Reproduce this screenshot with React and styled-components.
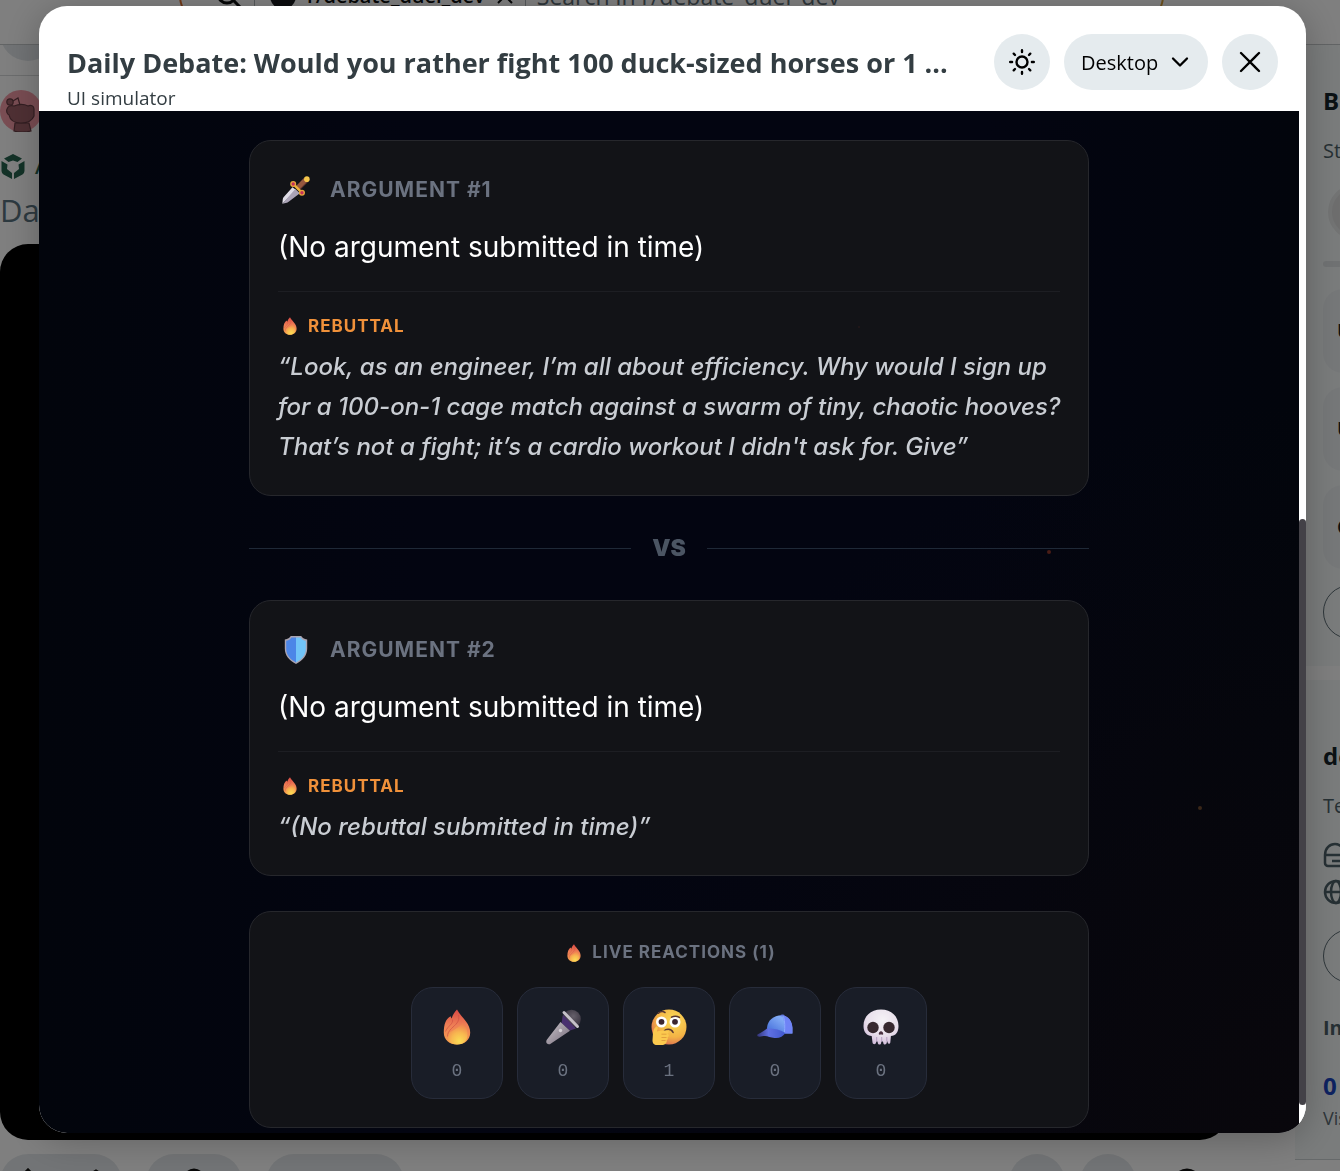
import React from "react";
import styled, { createGlobalStyle } from "styled-components";

const debate = [
  {
    title: "Argument #1",
    icon: "dagger",
    text: "(No argument submitted in time)",
    rebuttal:
      "“Look, as an engineer, I’m all about efficiency. Why would I sign up for a 100-on-1 cage match against a swarm of tiny, chaotic hooves? That’s not a fight; it’s a cardio workout I didn't ask for. Give”",
  },
  {
    title: "Argument #2",
    icon: "shield",
    text: "(No argument submitted in time)",
    rebuttal: "“(No rebuttal submitted in time)”",
  },
];

const reactions = [
  { icon: "fire", label: "Fire", count: 0 },
  { icon: "mic", label: "Mic drop", count: 0 },
  { icon: "thinking", label: "Thinking", count: 1 },
  { icon: "cap", label: "Cap", count: 0 },
  { icon: "skull", label: "Skull", count: 0 },
];

const sparks = [
  { x: "80%", y: "43%", size: 4, color: "#4a1d16" },
  { x: "92%", y: "68%", size: 4, color: "#3a2718" },
  { x: "65%", y: "21%", size: 2, color: "#24181a" },
];

function Fire({ size }) {
  return (
    <svg width={size} height={size} viewBox="0 0 40 40" aria-hidden="true">
      <defs>
        <linearGradient id="fireBack" x1="0.5" y1="0" x2="0.5" y2="1">
          <stop offset="0" stopColor="#dc4a45" />
          <stop offset="0.45" stopColor="#ee7f55" />
          <stop offset="1" stopColor="#f5a04d" />
        </linearGradient>
        <radialGradient id="fireFront" cx="0.58" cy="0.85" r="0.8">
          <stop offset="0" stopColor="#fbdc55" />
          <stop offset="0.5" stopColor="#f8b850" />
          <stop offset="1" stopColor="#ee8050" />
        </radialGradient>
      </defs>
      <path
        d="M20 2.500c2.500 5 6 7.500 9 12 2.500 3.500 4.200 6.500 4.200 11C33.200 33 27.500 37.500 20 37.500S6.800 33 6.800 25.500c0-4 .4-7.500 1.700-10.500 1-2.500 2.800-4.500 5.300-5.800.2 1 .3 1.600.9 2.300C15.500 8 17.500 5 20 2.500z"
        fill="url(#fireBack)"
      />
      <path
        d="M25.500 16c4 4 5.500 8.500 5 13-.6 5-4.500 8.500-10.500 8.500-6.500 0-9.500-4-9-8.500.6-5.500 10-6.500 14.500-13z"
        fill="url(#fireFront)"
      />
      <path
        d="M21.500 8c1.500 7-3 9.500-7 13.500-2.800 2.800-4 5-4 8M15.500 12.500c1 4.500-4.500 6-7 12"
        fill="none"
        stroke="#cf5045"
        strokeWidth="1"
        opacity="0.7"
      />
    </svg>
  );
}

function Mic({ size }) {
  return (
    <svg width={size} height={size} viewBox="0 0 40 40" aria-hidden="true">
      <defs>
        <linearGradient id="micBody" x1="0" y1="0" x2="1" y2="1">
          <stop offset="0.2" stopColor="#b9b3ba" />
          <stop offset="1" stopColor="#756a7a" />
        </linearGradient>
        <radialGradient id="micHead" cx="0.6" cy="0.35" r="0.7">
          <stop offset="0" stopColor="#66606b" />
          <stop offset="1" stopColor="#2b2632" />
        </radialGradient>
      </defs>
      <circle cx="28.500" cy="12" r="9.300" fill="url(#micHead)" />
      <path d="M20 8L33 21.500l-6 2-8.500-7.500z" fill="#49306f" />
      <path
        d="M17.500 15l9.500 8.800L8 36.500c-1.500 1.200-3 1-4 0s-1-2.500 0-4z"
        fill="url(#micBody)"
      />
      <path
        d="M21 5.500L34.500 19.500"
        stroke="#c6c1c9"
        strokeWidth="3"
        strokeLinecap="round"
      />
      <circle cx="17.500" cy="23.500" r="1.700" fill="#d8d3da" />
    </svg>
  );
}

function Thinking({ size }) {
  return (
    <svg width={size} height={size} viewBox="0 0 40 40" aria-hidden="true">
      <defs>
        <radialGradient id="thinkFace" cx="0.65" cy="0.3" r="0.75">
          <stop offset="0" stopColor="#fbdc58" />
          <stop offset="0.65" stopColor="#f3b345" />
          <stop offset="1" stopColor="#dc7050" />
        </radialGradient>
      </defs>
      <circle cx="20" cy="20" r="17.500" fill="url(#thinkFace)" />
      <circle cx="12.500" cy="15" r="5.500" fill="#fff" />
      <circle cx="26" cy="15" r="5.500" fill="#fff" />
      <circle cx="12.500" cy="14.800" r="2.900" fill="#3b2530" />
      <circle cx="26" cy="14.800" r="2.900" fill="#3b2530" />
      <path
        d="M9.500 6.200c2-1.800 4.500-2 6.500-.7M22.500 10.200c2.500-1.300 5.500-1.200 8 .1M14.800 25c1.500-3.500 7.500-3.700 9.300.5"
        fill="none"
        stroke="#573530"
        strokeWidth="1.500"
        strokeLinecap="round"
      />
      <path
        d="M4 26c0-2.500 1-5 3-6.300 1.200-.6 2.200.5 1.700 1.800L7.900 24.500c2.800-.6 7-1.200 10.100-.9 2.200.3 2.200 2.800.2 3.200l1.200.6c1 1-.1 2.600-1 2.800 1 1 .3 2.500-.7 2.800.5 1.500-.5 4.500-4 5H8c-3 0-4.700-2-4.500-5z"
        fill="#fbc94e"
      />
      <path
        d="M12.500 27.200h5M12.500 30.500h5M12.500 33.500h4"
        stroke="#dc9638"
        strokeWidth="0.800"
      />
    </svg>
  );
}

function Cap({ size }) {
  return (
    <svg width={size} height={size} viewBox="0 0 40 40" aria-hidden="true">
      <defs>
        <linearGradient id="capCrown" x1="0" y1="1" x2="1" y2="0">
          <stop offset="0" stopColor="#3f68d8" />
          <stop offset="0.7" stopColor="#83adf6" />
          <stop offset="1" stopColor="#7385f7" />
        </linearGradient>
        <linearGradient id="capBrim" x1="0" y1="0" x2="1" y2="0">
          <stop offset="0" stopColor="#343579" />
          <stop offset="0.4" stopColor="#5f70e2" />
          <stop offset="1" stopColor="#4058ce" />
        </linearGradient>
      </defs>
      <path
        d="M12 21c.5-7.500 6-12.500 15-12.800 6 .8 9.800 5.500 10.300 12.500v5.800h-10L12 24z"
        fill="url(#capCrown)"
      />
      <path d="M27.500 8.200c1.800 5.500 2.500 11 1.800 18.300h8.200v-5.700c-.5-7-4-11.500-10-12.600z" fill="#6f83f6" />
      <path d="M28.500 9c1.500 6 1.600 11 .8 17" fill="none" stroke="#8aa9ff" strokeWidth="1" />
      <path
        d="M2.500 27.500c4-2 7-4 9.500-6 6.500-.2 13.500 1 18.500 4.500-2.500 3.500-6 5.500-11 5-4-.5-6.500-1.800-9.500-2-2.500 0-4.500 1-6.500.6-1.200-.4-1.600-1.300-1-2.100z"
        fill="url(#capBrim)"
      />
      <ellipse cx="27.500" cy="8.400" rx="2" ry="0.900" fill="#637bdf" />
    </svg>
  );
}

function Skull({ size }) {
  return (
    <svg width={size} height={size} viewBox="0 0 40 40" aria-hidden="true">
      <defs>
        <radialGradient id="skullHead" cx="0.55" cy="0.3" r="0.75">
          <stop offset="0" stopColor="#f5f2f6" />
          <stop offset="0.6" stopColor="#e8dfeb" />
          <stop offset="1" stopColor="#cfb7d8" />
        </radialGradient>
      </defs>
      <path
        d="M20 2.500C9.500 2.500 2.500 9.500 2.500 19c0 6.500 3.500 9.700 8.200 10l.8 6.500c.2 2 3 2.200 3.500.5l.3-1.500h1.200l.3 1.500c.4 2 3 2 3.300.2l.3-1.700H22l.3 1.500c.4 2 3 2 3.400.1l.3-1.600h.5l.2 1.200c.4 1.500 2.400 1.300 2.600-.2l.6-6.500c4.700-.3 7.600-3.500 7.600-10C37.500 9.500 30.500 2.500 20 2.500z"
        fill="url(#skullHead)"
      />
      <circle cx="12" cy="20.500" r="5.700" fill="#37292f" />
      <circle cx="28" cy="20.500" r="5.700" fill="#37292f" />
      <path
        d="M20 24.300c1.300 0 2.500 1.900 2.200 3-.3.700-1.400.2-2.200.2s-1.900.5-2.200-.2c-.3-1.100.9-3 2.200-3z"
        fill="#4a3140"
      />
      <path d="M15.700 30v4.500M20.700 30v4.500M25.800 30v4.500" stroke="#a991b7" strokeWidth="0.800" />
    </svg>
  );
}

function Dagger({ size }) {
  return (
    <svg width={size} height={size} viewBox="0 0 40 40" aria-hidden="true">
      <path d="M15 16l5 4L0.500 39.500 1 34c.3-2 1-3.500 2.500-5z" fill="#dfdce6" />
      <path d="M19 18.500l6.500 6L10 36.500c-1.500 1-2.500 1.700-4.500 2.200l-5 .8z" fill="#aaa3b6" />
      <path d="M22 17.500L34 5.500" stroke="#96583f" strokeWidth="7.500" />
      <path d="M24.500 20L36.500 8" stroke="#6f3d33" strokeWidth="1.500" />
      <path d="M16.500 12L28 23.500" stroke="#efb23c" strokeWidth="3.500" strokeLinecap="round" />
      <circle cx="16" cy="11.500" r="4.300" fill="#e6a53b" />
      <circle cx="28.500" cy="24" r="4.300" fill="#e6a53b" />
      <circle cx="16" cy="11.500" r="2.400" fill="#c42e5a" />
      <circle cx="28.500" cy="24" r="2.400" fill="#c42e5a" />
      <circle cx="35.500" cy="4.500" r="4" fill="#f5c64c" />
    </svg>
  );
}

function Shield({ size }) {
  return (
    <svg width={size} height={size} viewBox="0 0 40 40" aria-hidden="true">
      <path
        d="M12.500 0h15c1.500 2.500 4 4.500 8.500 5v13c0 10-6 17-16 22C10 35 4 28 4 18V5c4.500-.5 7-2.500 8.500-5z"
        fill="#aaa4b1"
      />
      <path d="M20 2h-6.500c-1.500 2.700-4 4.400-7.500 4.900V18c0 9 5 15 14 19.700z" fill="#4c86e7" />
      <path d="M20 2h6.500c1.500 2.700 4 4.400 7.500 4.900V18c0 9-5 15-14 19.700z" fill="#71c4f8" />
    </svg>
  );
}

const emojis = {
  fire: Fire,
  mic: Mic,
  thinking: Thinking,
  cap: Cap,
  skull: Skull,
  dagger: Dagger,
  shield: Shield,
};

function Emoji({ name, size }) {
  const Icon = emojis[name];
  return <Icon size={size} />;
}

function Backdrop() {
  return (
    <Page>
      <TopBar>
        <SearchBar>
          <svg width="28" height="28" viewBox="0 0 28 28" fill="none" stroke="#0b0d0e" strokeWidth="3">
            <circle cx="12" cy="12" r="9" />
            <path d="M18.500 18.500l7 7" />
          </svg>
          <Separator />
          <CommunityDot />
          <strong>r/debate_duel_dev</strong>
          <svg width="18" height="18" viewBox="0 0 18 18" stroke="#0b0d0e" strokeWidth="2">
            <path d="M2 2l14 14M16 2L2 16" />
          </svg>
          <Separator />
          <span>Search in r/debate_duel_dev</span>
        </SearchBar>
      </TopBar>
      <Columns>
        <Feed>
          <BackRow>
            <BackButton type="button" aria-label="Back" />
          </BackRow>
          <Author>
            <svg width="42" height="42" viewBox="0 0 42 42" aria-hidden="true">
              <circle cx="21" cy="21" r="21" fill="#f39aa6" />
              <g fill="#9e6068" stroke="#653c43" strokeWidth="1.200">
                <path d="M15 33h14l2 8c-6 1.500-12 1.500-17 0z" />
                <path d="M7 19c1-3 4-4 7-3 5-2 10-2 14 0 3-1.500 6 0 6 3v7c-2 5-8 7-13 7-7 0-11-3-12-8-2-1-3-4-2-6z" />
                <circle cx="10" cy="12" r="3.200" />
                <path d="M13 11l5-3 2 7" fill="none" />
              </g>
            </svg>
          </Author>
          <AppTag>
            <svg width="26" height="26" viewBox="0 0 26 26" fill="#27644f" aria-hidden="true">
              <path d="M13 1l9 4.500-4.500 3.500-4.500-1.500L8.500 9 4 5.500z" />
              <path d="M1.500 8l6 3.500-.5 4.500 5 4v6l-8.500-4.500a4 4 0 0 1-2-3.400z" />
              <path d="M24.500 8l-6 3.500.5 4.500-5 4v6l8.500-4.500a4 4 0 0 0 2-3.400z" />
            </svg>
            <span>APP</span>
          </AppTag>
          <PostTitle>Daily</PostTitle>
          <Media />
          <PostActions>
            <Pill $width={122}>
              <svg width="90" height="18" viewBox="0 0 90 18" fill="none" stroke="#111" strokeWidth="3">
                <path d="M4 10l8-8 8 8M72 8l8-5 8 5" />
              </svg>
            </Pill>
            <Pill $width={96}>
              <svg width="22" height="22" viewBox="0 0 22 22" fill="none" stroke="#111" strokeWidth="3">
                <circle cx="11" cy="11" r="9" />
              </svg>
            </Pill>
            <Pill $width={138} />
            <ActionsEnd>
              <Pill $width={56} />
              <Pill $width={56} />
              <Views>
                <svg width="24" height="22" viewBox="0 0 24 22" fill="none" stroke="#111" strokeWidth="3">
                  <ellipse cx="12" cy="11" rx="11" ry="9" />
                </svg>
              </Views>
            </ActionsEnd>
          </PostActions>
        </Feed>
        <Sidebar>
          <Rules>
            <h2>Build</h2>
            <p>Steps</p>
            <Ring />
            <Progress />
            <Task>U</Task>
            <Task>U</Task>
            <Task>C</Task>
            <Outline type="button" aria-label="Show all" />
          </Rules>
          <About>
            <h2>debate_duel_dev</h2>
            <p>Test</p>
            <svg width="24" height="26" viewBox="0 0 24 26" fill="none" stroke="#4d6169" strokeWidth="2.500">
              <path d="M5 24h14a3 3 0 0 0 3-3v-8c0-7-5-11-10-11S2 6 2 13v8a3 3 0 0 0 3 3zM3 13h18M9 19h12" />
            </svg>
            <svg width="26" height="26" viewBox="0 0 26 26" fill="none" stroke="#4d6169" strokeWidth="2.500">
              <circle cx="13" cy="13" r="11" />
              <ellipse cx="13" cy="13" rx="5" ry="11" />
              <path d="M2 13h22" />
            </svg>
            <Outline type="button" aria-label="Guide" />
            <h3>Insights</h3>
            <Stat>0</Stat>
            <small>Visitors</small>
          </About>
        </Sidebar>
      </Columns>
    </Page>
  );
}

function ArgumentCard({ item }) {
  return (
    <Card>
      <ArgumentHead>
        <Emoji name={item.icon} size={28} />
        <h2>{item.title}</h2>
      </ArgumentHead>
      <ArgumentText>{item.text}</ArgumentText>
      <Rebuttal>
        <RebuttalHead>
          <Emoji name="fire" size={20} />
          Rebuttal
        </RebuttalHead>
        <Quote>{item.rebuttal}</Quote>
      </Rebuttal>
    </Card>
  );
}

function App() {
  return (
    <>
      <GlobalStyle />
      <Backdrop />
      <Overlay>
        <Modal role="dialog" aria-labelledby="simulator-title">
          <ModalHeader>
            <Titles>
              <h1 id="simulator-title">
                Daily Debate: Would you rather fight 100 duck-sized horses or 1 ...
              </h1>
              <p>UI simulator</p>
            </Titles>
            <Controls>
              <RoundButton type="button" aria-label="Toggle theme">
                <svg width="28" height="28" viewBox="0 0 28 28" fill="none" stroke="#000" strokeWidth="2.400" strokeLinecap="round">
                  <circle cx="14" cy="14" r="5.500" />
                  <path d="M14 2.200v1.900M14 23.900v1.900M2.200 14h1.900M23.900 14h1.900M5.700 5.700l1.300 1.300M21 21l1.300 1.300M22.300 5.700l-1.300 1.300M7 21l-1.300 1.300" />
                </svg>
              </RoundButton>
              <DeviceField>
                <select aria-label="Device" defaultValue="Desktop">
                  <option>Desktop</option>
                  <option>Mobile</option>
                </select>
                <svg width="18" height="12" viewBox="0 0 18 12" fill="none" stroke="#000" strokeWidth="2.300" strokeLinecap="round" strokeLinejoin="round">
                  <path d="M2 2.500l7 7 7-7" />
                </svg>
              </DeviceField>
              <RoundButton type="button" aria-label="Close">
                <svg width="22" height="22" viewBox="0 0 22 22" stroke="#000" strokeWidth="2.300" strokeLinecap="round">
                  <path d="M2 2l18 18M20 2L2 20" />
                </svg>
              </RoundButton>
            </Controls>
          </ModalHeader>
          <ModalBody>
            <Stage>
              {sparks.map((spark, index) => (
                <Spark
                  key={index}
                  style={{
                    left: spark.x,
                    top: spark.y,
                    width: spark.size,
                    height: spark.size,
                    background: spark.color,
                  }}
                />
              ))}
              <Content>
                <ArgumentCard item={debate[0]} />
                <Versus>VS</Versus>
                <ArgumentCard item={debate[1]} />
                <ReactionCard>
                  <ReactionHead>
                    <Emoji name="fire" size={20} />
                    Live reactions (1)
                  </ReactionHead>
                  <ReactionList>
                    {reactions.map((item) => (
                      <Reaction key={item.icon} type="button" aria-label={item.label}>
                        <Emoji name={item.icon} size={40} />
                        <span>{item.count}</span>
                      </Reaction>
                    ))}
                  </ReactionList>
                </ReactionCard>
              </Content>
            </Stage>
            <ScrollTrack>
              <ScrollThumb />
            </ScrollTrack>
          </ModalBody>
        </Modal>
      </Overlay>
    </>
  );
}

export default App;

const GlobalStyle = createGlobalStyle`
  * {
    box-sizing: border-box;
  }
  html, body, #root {
    height: 100%;
  }
  body {
    margin: 0;
    overflow: hidden;
    background: #fff;
    font-family: "Open Sans", "Noto Sans", sans-serif;
  }
  h1, h2, h3, p {
    margin: 0;
  }
  button, select {
    font: inherit;
  }
  svg {
    display: block;
    flex-shrink: 0;
  }
`;

const Page = styled.div`
  height: 100%;
  display: flex;
  flex-direction: column;
  overflow: hidden;
`;
const TopBar = styled.header`
  height: 98px;
  flex-shrink: 0;
  margin-top: -53px;
  padding: 0 176px 0 179px;
  display: flex;
  align-items: center;
  border-bottom: 1px solid #c4c8ca;
`;
const SearchBar = styled.div`
  flex: 1;
  height: 56px;
  padding-left: 34px;
  display: flex;
  align-items: center;
  gap: 11px;
  border: 2px solid #e0702f;
  border-right-color: #d9a13a;
  border-radius: 28px;
  font-size: 20px;
  line-height: 28px;
  color: #0b0d0e;
  white-space: nowrap;
  strong {
    font-weight: 600;
  }
  span {
    font-size: 23px;
    color: #5c6c74;
  }
`;
const Separator = styled.i`
  width: 1px;
  height: 28px;
  background: #aeb4b7;
`;
const CommunityDot = styled.i`
  width: 26px;
  height: 26px;
  margin-left: 4px;
  border-radius: 50%;
  background: #17191d;
`;
const Columns = styled.div`
  flex: 1;
  display: grid;
  grid-template-columns: minmax(0, 1fr) 45px;
`;
const Feed = styled.main`
  display: flex;
  flex-direction: column;
  min-width: 0;
`;
const BackRow = styled.div`
  height: 31px;
  overflow: hidden;
  border-bottom: 1px solid #d7d9da;
`;
const BackButton = styled.button`
  display: block;
  width: 56px;
  height: 56px;
  margin-top: -40px;
  border: 0;
  border-radius: 28px;
  background: #e2e6ea;
`;
const Author = styled.div`
  padding-top: 14px;
`;
const AppTag = styled.div`
  display: flex;
  align-items: center;
  gap: 9px;
  height: 28px;
  margin-top: 20px;
  font-size: 20px;
  font-weight: 600;
  color: #27644f;
`;
const PostTitle = styled.h2`
  margin-top: 10px;
  font-size: 31px;
  font-weight: 500;
  line-height: 40px;
  color: #5a7380;
`;
const Media = styled.div`
  flex: 1;
  margin: 14px 67px 14px 0;
  border-radius: 28px;
  background: #000;
`;
const PostActions = styled.div`
  display: flex;
  gap: 24px;
  height: 17px;
  padding-right: 96px;
`;
const ActionsEnd = styled.div`
  display: flex;
  gap: 15px;
  margin-left: auto;
`;
const Pill = styled.div`
  width: ${(props) => props.$width}px;
  height: 56px;
  padding-top: 14px;
  display: flex;
  justify-content: center;
  flex-shrink: 0;
  border-radius: 28px;
  background: #e5e9ec;
`;
const Views = styled.div`
  padding: 14px 0 0 24px;
`;
const Sidebar = styled.aside`
  overflow: hidden;
  white-space: nowrap;
  display: flex;
  flex-direction: column;
  gap: 14px;
  color: #16242a;
  h2 {
    font-size: 24px;
    font-weight: 700;
    line-height: 32px;
  }
  h3 {
    margin-top: 29px;
    font-size: 20px;
    line-height: 32px;
    color: #4d6169;
  }
  p {
    margin-top: 20px;
    font-size: 20px;
    line-height: 28px;
    color: #4d6169;
  }
  small {
    display: block;
    font-size: 18px;
    line-height: 32px;
    color: #5c6c74;
  }
`;
const SideCard = styled.section`
  width: 420px;
  padding-left: 28px;
  background: #f5f9f9;
`;
const Rules = styled(SideCard)`
  height: 621px;
  padding-top: 40px;
`;
const About = styled(SideCard)`
  height: 480px;
  padding-top: 60px;
  border-bottom: 1px solid #ccd3d5;
  svg {
    margin-top: 11px;
  }
  p {
    margin-bottom: 22px;
  }
`;
const Ring = styled.div`
  width: 56px;
  height: 56px;
  margin: 19px 0 21px 5px;
  border: 4px solid #e6e8e8;
  border-radius: 50%;
  background: #dcdddd;
`;
const Progress = styled.div`
  height: 6px;
  border-radius: 3px;
  background: #e1e4e6;
`;
const Task = styled.div`
  height: 84px;
  margin: 22px 0 -8px;
  padding-left: 14px;
  border-radius: 20px;
  background: #edf1f3;
  font-size: 20px;
  font-weight: 700;
  line-height: 84px;
`;
const Outline = styled.button`
  display: block;
  width: 360px;
  height: 54px;
  margin-top: 24px;
  border: 1px solid #5c6c74;
  border-radius: 27px;
  background: transparent;
`;
const Stat = styled.div`
  margin-top: 26px;
  font-size: 24px;
  font-weight: 700;
  line-height: 32px;
  color: #1b46c2;
`;

const Overlay = styled.div`
  position: fixed;
  inset: 0;
  display: flex;
  padding: 6px 34px 38px 39px;
  background: rgba(0, 0, 0, 0.5);
`;
const Modal = styled.div`
  flex: 1;
  min-width: 0;
  display: flex;
  flex-direction: column;
  overflow: hidden;
  border-radius: 28px;
  background: #fff;
  box-shadow: 0 6px 36px rgba(0, 0, 0, 0.25);
`;
const ModalHeader = styled.header`
  display: flex;
  justify-content: space-between;
  align-items: flex-start;
  gap: 24px;
  padding: 28px 28px 0;
`;
const Titles = styled.div`
  min-width: 0;
  padding-top: 11px;
  color: #333d42;
  h1 {
    font-size: 27px;
    font-weight: 700;
    line-height: 36px;
    white-space: nowrap;
  }
  p {
    margin-top: 4px;
    font-size: 19px;
    line-height: 26px;
  }
`;
const Controls = styled.div`
  display: flex;
  flex-shrink: 0;
  gap: 14px;
`;
const RoundButton = styled.button`
  display: flex;
  align-items: center;
  justify-content: center;
  width: 56px;
  height: 56px;
  padding: 0;
  border: 0;
  border-radius: 50%;
  background: #e5ebee;
`;
const DeviceField = styled.div`
  position: relative;
  select {
    appearance: none;
    width: 144px;
    height: 56px;
    padding: 0 40px 0 17px;
    border: 0;
    border-radius: 28px;
    background: #e5ebee;
    font-size: 20px;
    font-weight: 500;
    color: #000;
  }
  svg {
    position: absolute;
    top: 22px;
    right: 19px;
    pointer-events: none;
  }
`;
const ModalBody = styled.div`
  flex: 1;
  min-height: 0;
  display: flex;
`;
const Stage = styled.div`
  position: relative;
  flex: 1;
  min-width: 0;
  overflow: hidden;
  padding: 29px 24px 5px;
  background: radial-gradient(circle at 100% 100%, #09070c 0%, rgba(9, 7, 12, 0) 45%),
    linear-gradient(90deg, #02050c 0%, #030511 30%, #030511 75%, #02050c 100%);
  font-family: Inter, sans-serif;
`;
const Spark = styled.i`
  position: absolute;
  border-radius: 50%;
`;
const Content = styled.div`
  max-width: 840px;
  margin: 0 auto;
`;
const Card = styled.section`
  padding: 28px;
  border: 1px solid #26272c;
  border-radius: 22px;
  background: #121317;
`;
const ArgumentHead = styled.div`
  display: flex;
  align-items: center;
  gap: 20px;
  height: 42px;
  padding-left: 4px;
  h2 {
    font-size: 21px;
    font-weight: 700;
    line-height: 28px;
    letter-spacing: 1px;
    text-transform: uppercase;
    color: #6b7280;
  }
`;
const ArgumentText = styled.p`
  margin: 13px 0 21px;
  font-size: 28px;
  line-height: 46px;
  color: #fff;
`;
const Rebuttal = styled.div`
  padding-top: 20px;
  border-top: 1px solid #1d1e23;
`;
const RebuttalHead = styled.h3`
  display: flex;
  align-items: center;
  gap: 8px;
  margin-bottom: 7px;
  padding-left: 2px;
  font-size: 17px;
  font-weight: 700;
  line-height: 28px;
  letter-spacing: 1px;
  text-transform: uppercase;
  color: #f0913a;
`;
const Quote = styled.p`
  margin-right: -8px;
  font-size: 24px;
  font-style: italic;
  font-weight: 500;
  line-height: 40px;
  color: #c9cdd3;
`;
const Versus = styled.div`
  display: flex;
  align-items: center;
  gap: 21px;
  height: 104px;
  font-size: 23px;
  font-weight: 900;
  color: #4b5563;
  &::before,
  &::after {
    content: "";
    flex: 1;
    height: 1px;
    background: #1f2937;
  }
`;
const ReactionCard = styled(Card)`
  margin-top: 35px;
`;
const ReactionHead = styled(RebuttalHead)`
  justify-content: center;
  margin-bottom: 22px;
  line-height: 25px;
  color: #6b7280;
`;
const ReactionList = styled.div`
  display: flex;
  justify-content: center;
  gap: 14px;
`;
const Reaction = styled.button`
  display: flex;
  flex-direction: column;
  align-items: center;
  gap: 12px;
  width: 92px;
  height: 112px;
  padding: 19px 0 0;
  border: 1px solid #272c3a;
  border-radius: 22px;
  background: #191d27;
  span {
    font-family: "Liberation Mono", monospace;
    font-size: 18px;
    line-height: 24px;
    color: #6b7280;
  }
`;
const ScrollTrack = styled.div`
  display: flex;
  flex-direction: column;
  justify-content: flex-end;
  width: 7px;
  padding-bottom: 28px;
  background: #fff;
`;
const ScrollThumb = styled.div`
  height: 59%;
  border-radius: 4px;
  background: #434147;
`;
